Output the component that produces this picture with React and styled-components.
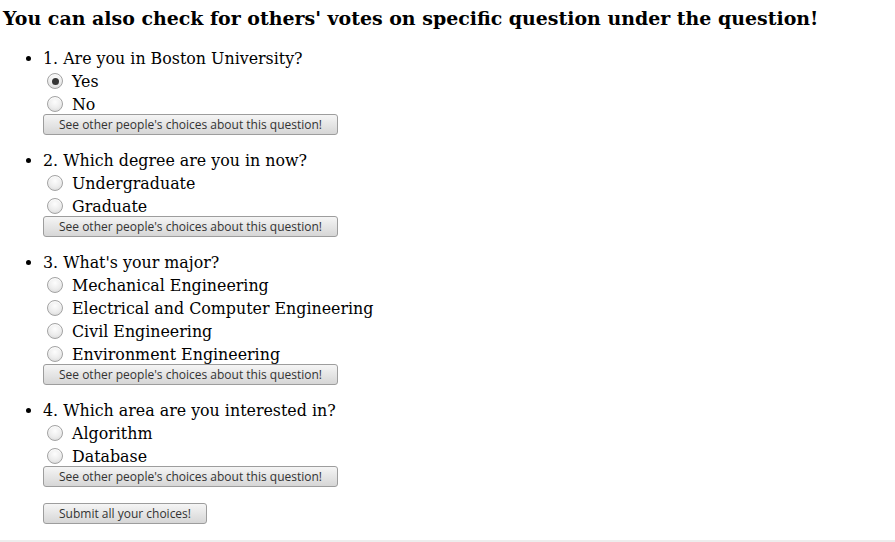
import React, {useState} from 'react';
import styled, {createGlobalStyle} from 'styled-components';

const GlobalStyle = createGlobalStyle`
  html, body {
    margin: 0;
    padding: 0;
    background: #ffffff;
  }
  body {
    font-family: "DejaVu Serif", serif;
    color: #000;
  }
`;

const questions = [
    {id: 'q1', title: '1. Are you in Boston University?', options: ['Yes', 'No']},
    {id: 'q2', title: '2. Which degree are you in now?', options: ['Undergraduate', 'Graduate']},
    {
        id: 'q3', title: "3. What's your major?", options: [
            'Mechanical Engineering',
            'Electrical and Computer Engineering',
            'Civil Engineering',
            'Environment Engineering'
        ]
    },
    {id: 'q4', title: '4. Which area are you interested in?', options: ['Algorithm', 'Database']},
];

const App = () => {

    const [answers, setAnswers] = useState({q1: 'Yes'});

    const choose = (id, value) => setAnswers({...answers, [id]: value});

    return <Page>
        <GlobalStyle/>
        <Main>
            <Heading>You can also check for others' votes on specific question under the question!</Heading>

            <QuestionList>
                {questions.map((q) => {
                    return <Question key={q.id}>
                        <QuestionTitle>{q.title}</QuestionTitle>
                        {q.options.map((opt) => {
                            return <OptionRow key={opt}>
                                <Radio type="radio"
                                       name={q.id}
                                       checked={answers[q.id] === opt}
                                       onChange={() => choose(q.id, opt)}/>
                                <OptionLabel>{opt}</OptionLabel>
                            </OptionRow>
                        })}
                        <GrayButton $width={295}>See other people's choices about this question!</GrayButton>
                    </Question>
                })}
            </QuestionList>

            <SubmitRow>
                <GrayButton $width={164}>Submit all your choices!</GrayButton>
            </SubmitRow>
        </Main>
        <BottomBar/>
    </Page>;

}

const Page = styled.div`
  min-height: 100vh;
  display: flex;
  flex-direction: column;
`

const Main = styled.main`
  flex: 1;
  padding: 7px 0 0 3px;
`

const Heading = styled.h3`
  margin: 0 0 18px;
  font-size: 18.95px;
  font-weight: bold;
  line-height: 22px;
`

const QuestionList = styled.ul`
  margin: 0;
  padding-left: 40px;
  list-style: disc;
`

const Question = styled.li`
  margin-bottom: 14px;
  font-size: 15.85px;
  line-height: 23px;
`

const QuestionTitle = styled.div`
  height: 21px;
`

const OptionRow = styled.label`
  box-sizing: border-box;
  display: flex;
  align-items: center;
  height: 23px;
  padding: 3px 0 0 4px;
`

const Radio = styled.input`
  appearance: none;
  box-sizing: border-box;
  width: 16px;
  height: 16px;
  margin: 0 9px 0 0;
  border-radius: 50%;
  border: 1px solid #a3a3a3;
  background: radial-gradient(circle at 50% 35%, #fdfdfd 0%, #ececec 55%, #d2d2d2 100%);
  box-shadow: inset 0 1px 1px rgba(255, 255, 255, 0.9);
  display: grid;
  place-items: center;

  &:checked::after {
    content: '';
    width: 7px;
    height: 7px;
    border-radius: 50%;
    background: #363636;
  }
`

const OptionLabel = styled.span`
  line-height: 19px;
`

const GrayButton = styled.button`
  display: block;
  width: ${props => props.$width}px;
  height: 21px;
  padding: 0;
  font-family: "Open Sans", sans-serif;
  font-size: 12px;
  color: #333333;
  border: 1px solid #9d9d9d;
  border-radius: 3px;
  background: linear-gradient(#f5f5f5, #d6d6d6);
  cursor: pointer;
`

const SubmitRow = styled.div`
  padding: 2px 0 0 40px;
`

const BottomBar = styled.div`
  height: 2px;
  background: #ededed;
`

export default App;
